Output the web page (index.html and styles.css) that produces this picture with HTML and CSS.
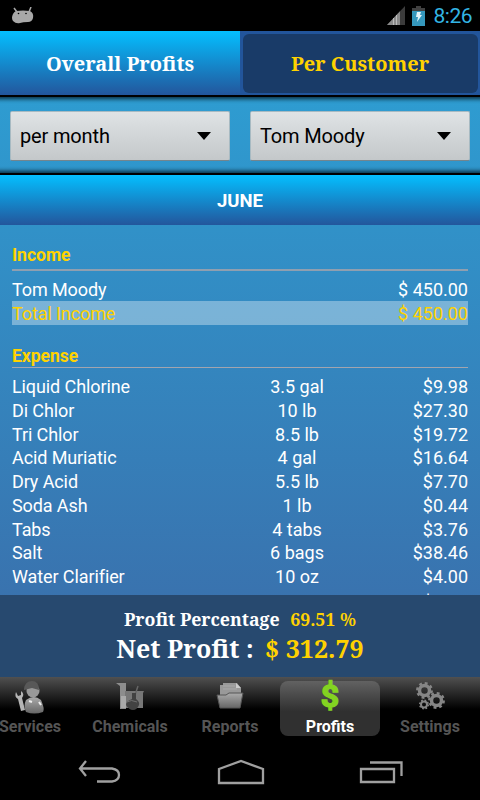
FILE: index.html
```html
<html>

<head>
    <meta charset="utf-8">
    <title>Profits</title>
    <link rel="stylesheet" href="styles.css">
</head>

<body>
    <div class="status">
        <svg class="droid" width="24" height="18" viewBox="0 0 24 18">
            <path d="M3 1l3 4M20 0l-2 5" stroke="#a8a8a8" stroke-width="1.500" />
            <path d="M5 4Q12 3 19 4Q23 6 22 11Q21 15 17 15Q12 15 9 16Q5 17 2 14Q0 11 2 7Q3 5 5 4z" fill="#a8a8a8" />
            <circle cx="7.500" cy="6.500" r="0.800" />
            <circle cx="15" cy="6.500" r="0.800" />
        </svg>
        <div class="status_right">
            <svg width="18" height="19" viewBox="0 0 18 19">
                <path d="M0 19L18 0V19z" fill="#3c3c3c" />
                <path d="M0 19L13 5.300V19z" fill="#8a8a8a" />
                <path d="M6.500 12v7M9.500 9v10" stroke="#bbb" />
            </svg>
            <svg width="13" height="20" viewBox="0 0 13 20">
                <path d="M4 0h5v2h4v3H0V2h4z" fill="#414141" />
                <path d="M0 5h13v15H0z" fill="#3598bd" />
                <path d="M5 6h4l-1 3h2l-5 7 1-5H4z" fill="#e4f4fa" />
            </svg>
            <div class="clock">8:26</div>
        </div>
    </div>

    <div class="top_tabs">
        <div class="top_tab">Overall Profits</div>
        <div class="top_tab picked"><div class="picked_box">Per Customer</div></div>
    </div>

    <div class="main">
        <div class="filters">
            <div class="spinner">per month<div class="arrow"></div></div>
            <div class="spinner">Tom Moody<div class="arrow"></div></div>
        </div>
        <div class="month">JUNE</div>

        <div class="list">
            <div class="heading">Income</div>
            <div class="row"><div>Tom Moody</div><div></div><div>$ 450.00</div></div>
            <div class="row total"><div>Total Income</div><div></div><div>$ 450.00</div></div>
            <div class="heading expense">Expense</div>
            <div class="row"><div>Liquid Chlorine</div><div>3.5 gal</div><div>$9.98</div></div>
            <div class="row"><div>Di Chlor</div><div>10 lb</div><div>$27.30</div></div>
            <div class="row"><div>Tri Chlor</div><div>8.5 lb</div><div>$19.72</div></div>
            <div class="row"><div>Acid Muriatic</div><div>4 gal</div><div>$16.64</div></div>
            <div class="row"><div>Dry Acid</div><div>5.5 lb</div><div>$7.70</div></div>
            <div class="row"><div>Soda Ash</div><div>1 lb</div><div>$0.44</div></div>
            <div class="row"><div>Tabs</div><div>4 tabs</div><div>$3.76</div></div>
            <div class="row"><div>Salt</div><div>6 bags</div><div>$38.46</div></div>
            <div class="row"><div>Water Clarifier</div><div>10 oz</div><div>$4.00</div></div>
            <div class="row last"><div>Cyanuric</div><div>1 oz</div><div>$4.00</div></div>
        </div>

        <div class="summary">
            <div class="percent">Profit Percentage <span class="value">69.51 %</span></div>
            <div class="net">Net Profit : <span class="value">$ 312.79</span></div>
        </div>
    </div>

    <div class="tabbar">
        <div class="tab">
            <svg width="32" height="34" viewBox="0 0 32 34">
                <defs>
                    <linearGradient id="silver" x1="0" y1="0" x2="0" y2="1">
                        <stop offset="0" stop-color="#ababab" />
                        <stop offset="1" stop-color="#666" />
                    </linearGradient>
                </defs>
                <path d="M12 19Q20 13 27 19Q31 28 29 31Q20 34 12 31Q9 25 12 19z" fill="url(#silver)" />
                <circle cx="19" cy="10" r="6.500" fill="#999" />
                <path d="M10 8Q11 0 18 0Q25 0 25 9L18 7L10 9z" fill="#585858" />
                <path d="M2 11l2 4 3-1 0-4q4 3 1 7l3 12-4 1-3-12Q0 16 2 11z" fill="#b5b5b5" />
                <path d="M15 20l3 1M25 21l2 3" stroke="#eee" stroke-width="2" />
            </svg>
            <div class="label">Services</div>
        </div>
        <div class="tab">
            <svg width="30" height="34" viewBox="0 0 30 34">
                <path d="M1 2h10v26H5V5z" fill="#8d8d8d" />
                <path d="M10 10h19l-1 2v15H10z" fill="#777" />
                <path d="M6 15h5v12H6z" fill="#aaa" />
                <path d="M23 5L19 17" stroke="#666" stroke-width="1.500" />
                <path d="M17 12h4v6q4 3 3 6-2 5-6 5t-7-5q0-4 6-6z" fill="#424242" />
                <path d="M12 21q4-3 10 0" stroke="#707070" fill="none" />
            </svg>
            <div class="label">Chemicals</div>
        </div>
        <div class="tab">
            <svg width="28" height="34" viewBox="0 0 28 34">
                <path d="M4 4h3V2h14l4 5v18H4z" fill="#999" />
                <path d="M20 2l5 5h-5z" fill="#ccc" />
                <path d="M7 5h12M7 8h14" stroke="#aaa" />
                <path d="M1 14h9l3-2h14l-3 15H4z" fill="url(#silver)" stroke="#555" />
            </svg>
            <div class="label">Reports</div>
        </div>
        <div class="tab active">
            <div class="dollar">$</div>
            <div class="label">Profits</div>
        </div>
        <div class="tab">
            <svg width="30" height="34" viewBox="0 0 30 34" fill="none" stroke="#858585">
                <circle cx="9.500" cy="9.500" r="5" stroke-width="3.500" />
                <circle cx="9.500" cy="9.500" r="7.200" stroke-width="2.500" stroke-dasharray="2.830 2.830" />
                <circle cx="21.500" cy="19.500" r="5" stroke-width="3.500" />
                <circle cx="21.500" cy="19.500" r="7.200" stroke-width="2.500" stroke-dasharray="2.830 2.830" />
                <circle cx="9" cy="23.500" r="3" stroke-width="2" />
                <circle cx="9" cy="23.500" r="4.300" stroke-width="1.500" stroke-dasharray="1.690 1.690" />
            </svg>
            <div class="label">Settings</div>
        </div>
    </div>

    <div class="navbar">
        <svg width="44" height="24" viewBox="0 0 44 24">
            <path d="M8 1L2 8.500L8 16M2 8.500H34Q41 9.500 41 15T34 21.500H19" />
        </svg>
        <svg width="48" height="26" viewBox="0 0 48 26">
            <path d="M2 24V10L24 2L46 10V24z" />
        </svg>
        <svg width="44" height="24" viewBox="0 0 44 24">
            <path d="M2 9H35V22H2zM11 2.500H42.500V16" />
        </svg>
    </div>
</body>

</html>
```
FILE: styles.css
```css
body {
    margin: 0;
    width: 480px;
    height: 800px;
    overflow: hidden;
    background-color: #000;
    color: #fff;
    font-family: Roboto, sans-serif;
    font-size: 18px;
    display: flex;
    flex-direction: column;
}

svg {
    display: block;
}

.status {
    height: 31px;
    flex: none;
    display: flex;
    justify-content: space-between;
    align-items: center;
    padding: 0 8px 0 11px;
}

.status_right {
    display: flex;
    align-items: center;
    gap: 7px;
}

.clock {
    color: #33b5e5;
    font-size: 21px;
    letter-spacing: -0.500px;
    margin-left: 2px;
}

.top_tabs {
    height: 64px;
    flex: none;
    display: flex;
    border-bottom: 2px solid #000;
    font-family: "Droid Serif", "Noto Serif", "DejaVu Serif Condensed", "DejaVu Serif", serif;
    font-weight: bold;
    font-size: 20px;
}

.top_tab {
    width: 240px;
    display: flex;
    justify-content: center;
    align-items: center;
    background: linear-gradient(#04bfff, #23569c);
}

.picked {
    background: #22559b;
    color: #ffd200;
}

.picked_box {
    width: 235px;
    height: 59px;
    display: flex;
    justify-content: center;
    align-items: center;
    border-radius: 6px;
    background-color: #193b68;
}

.main {
    height: 580px;
    flex: none;
    display: flex;
    flex-direction: column;
    background: linear-gradient(#2e9cd1, #3b6ca9);
}

.filters {
    box-sizing: border-box;
    height: 78px;
    padding-top: 1px;
    flex: none;
    display: flex;
    justify-content: space-around;
    align-items: center;
    border-bottom: 2px solid #000;
    box-shadow: inset 0 7px 4px -5px #0a2c3c, inset 0 -7px 4px -5px #0a2c3c;
}

.spinner {
    box-sizing: border-box;
    width: 220px;
    height: 50px;
    display: flex;
    justify-content: space-between;
    align-items: center;
    padding: 1px 18px 0 9px;
    border: 1px solid #a7bac2;
    border-bottom-color: #73858e;
    border-radius: 2px;
    background: linear-gradient(#dfe3e5, #c4c8ca);
    color: #000;
    font-size: 20px;
    letter-spacing: -0.150px;
}

.arrow {
    border: 7px solid transparent;
    border-top: 8px solid #000;
    border-bottom: 0;
}

.month {
    box-sizing: border-box;
    height: 50px;
    padding-top: 2px;
    flex: none;
    display: flex;
    justify-content: center;
    align-items: center;
    background: linear-gradient(#04bfff, #23569c);
    font-weight: bold;
    font-size: 18.500px;
}

.list {
    flex: 1;
    min-height: 0;
    overflow: hidden;
    padding: 18px 12px 0;
}

.heading {
    height: 26px;
    line-height: 24px;
    border-bottom: 2px solid #8f9fb0;
    margin-bottom: 6px;
    color: #ffd200;
    font-weight: bold;
    font-size: 17.500px;
}

.expense {
    height: 23px;
    margin-top: 19px;
    margin-bottom: 6.600px;
    border-bottom: 1px solid #a3a5ae;
}

.row {
    display: grid;
    grid-template-columns: 200px 170px 1fr;
    height: 23.750px;
    line-height: 26px;
}

.row div:nth-child(1) {
    letter-spacing: -0.100px;
}

.row div:nth-child(2) {
    text-align: center;
}

.row div:nth-child(3) {
    text-align: right;
}

.total {
    background-color: rgba(255, 255, 255, 0.35);
    color: #ffd200;
}

.last {
    margin-top: 2px;
}

.summary {
    height: 82px;
    flex: none;
    display: flex;
    flex-direction: column;
    align-items: center;
    background-color: #27496f;
    font-family: "Droid Serif", "Noto Serif", "DejaVu Serif Condensed", "DejaVu Serif", serif;
    font-weight: bold;
}

.percent {
    line-height: 24px;
    margin-top: 12px;
    font-size: 17.700px;
}

.percent .value {
    margin-left: 6px;
}

.net {
    line-height: 34px;
    font-size: 25px;
}

.net .value {
    margin-left: 5px;
}

.value {
    color: #ffd200;
}

.tabbar {
    height: 63px;
    flex: none;
    display: flex;
    justify-content: flex-end;
    background: linear-gradient(#505050, #000 32px);
}

.tab {
    flex: none;
    box-sizing: border-box;
    width: 100px;
    height: 55px;
    margin-top: 4px;
    display: flex;
    flex-direction: column;
    align-items: center;
    color: #555;
    font-weight: bold;
    font-size: 16px;
}

.tab svg {
    flex: none;
}

.label {
    line-height: 23px;
}

.active {
    border-radius: 8px;
    background: linear-gradient(#626262, #303030 55%);
    color: #fff;
}

.dollar {
    height: 34px;
    flex: none;
    line-height: 31px;
    font-size: 32px;
    color: #83d321;
    -webkit-text-stroke: 1.500px #83d321;
}

.navbar {
    flex: 1;
    display: flex;
    justify-content: space-between;
    align-items: center;
    padding: 3px 77px 0 78px;
}

.navbar path {
    fill: none;
    stroke: #a0a0a0;
    stroke-width: 2.300;
}
```
